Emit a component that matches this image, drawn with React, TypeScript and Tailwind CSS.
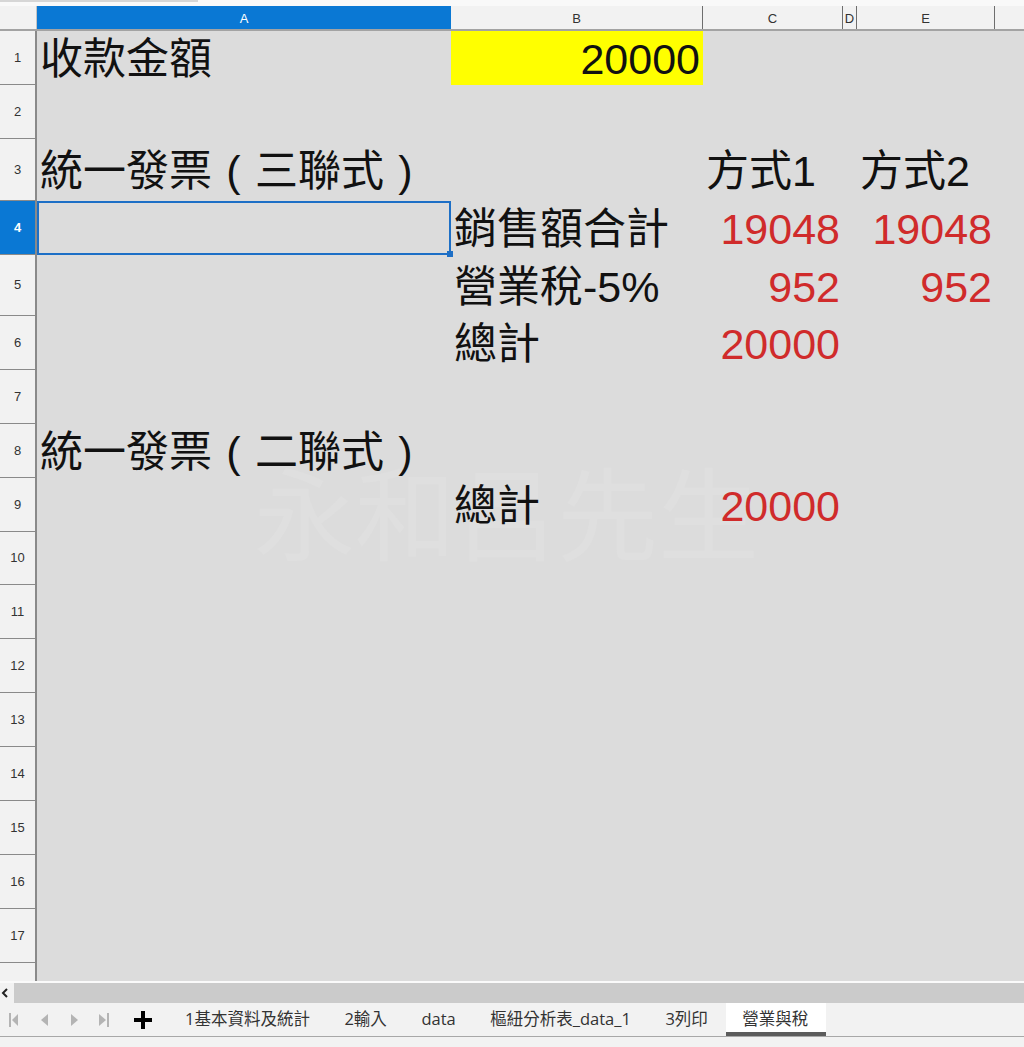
import React from "react";

type ColKey = "A" | "B" | "C" | "D" | "E" | "F";

type Cell = { text: React.ReactNode; right?: boolean; red?: boolean; fill?: boolean };

const COLS: { key: ColKey; w: string; label: string }[] = [
  { key: "A", w: "w-[414px]", label: "A" },
  { key: "B", w: "w-[252px]", label: "B" },
  { key: "C", w: "w-[140px]", label: "C" },
  { key: "D", w: "w-[14px]", label: "D" },
  { key: "E", w: "w-[138px]", label: "E" },
  { key: "F", w: "w-[80px]", label: "" },
];

const ROW_H = [
  "h-[54px]", "h-[54px]", "h-[62px]", "h-[54px]", "h-[61px]", "h-[54px]",
  "h-[54px]", "h-[54px]", "h-[54px]", "h-[53px]", "h-[54px]", "h-[54px]",
  "h-[54px]", "h-[54px]", "h-[54px]", "h-[54px]", "h-[54px]", "h-[54px]",
];

// full-width brackets sit centred in their em box
function Paren({ ch }: { ch: string }) {
  return <span className="inline-block w-[43px] text-center">{ch}</span>;
}

function Invoice({ kind }: { kind: string }) {
  return (
    <>
      統一發票
      <Paren ch="(" />
      {kind}聯式
      <Paren ch=")" />
    </>
  );
}

const DATA: Record<number, Partial<Record<ColKey, Cell>>> = {
  1: { A: { text: "收款金額" }, B: { text: "20000", right: true, fill: true } },
  3: { A: { text: <Invoice kind="三" /> }, C: { text: "方式1" }, E: { text: "方式2" } },
  4: {
    B: { text: "銷售額合計" },
    C: { text: "19048", right: true, red: true },
    E: { text: "19048", right: true, red: true },
  },
  5: {
    B: { text: "營業稅-5%" },
    C: { text: "952", right: true, red: true },
    E: { text: "952", right: true, red: true },
  },
  6: { B: { text: "總計" }, C: { text: "20000", right: true, red: true } },
  8: { A: { text: <Invoice kind="二" /> } },
  9: { B: { text: "總計" }, C: { text: "20000", right: true, red: true } },
};

const SHEETS = ["1基本資料及統計", "2輸入", "data", "樞紐分析表_data_1", "3列印", "營業與稅"];

const sans = "font-['Liberation_Sans','Noto_Sans_CJK_TC',sans-serif]";

function ColumnHeader() {
  return (
    <div className="flex h-[25px] border-b-2 border-[#a3a3a3] bg-[#f2f2f2]">
      <div className="w-[37px] shrink-0 border-r border-[#c4c4c4]" />
      {COLS.map((c) => (
        <div
          key={c.key}
          className={`${c.w} shrink-0 flex items-center justify-center pt-[2px] text-[13px] ${
            c.key === "A" ? "bg-[#0a78d4] text-white" : "border-r border-[#6e6e6e] text-[#333]"
          }`}
        >
          {c.label}
        </div>
      ))}
    </div>
  );
}

function SheetRow({ n }: { n: number }) {
  const row = DATA[n] ?? {};
  const active = n === 4;
  return (
    <div className={`relative flex shrink-0 ${ROW_H[n - 1]}`}>
      <div
        className={`w-[37px] shrink-0 flex items-center justify-center border-r-2 border-b border-[#8a8a8a] text-[13px] ${
          active ? "bg-[#0a78d4] text-white font-bold" : "bg-[#f2f2f2] text-[#333]"
        }`}
      >
        {n}
      </div>
      {COLS.map((c) => {
        const cell = row[c.key];
        const selected = active && c.key === "A";
        return (
          <div
            key={c.key}
            className={`${c.w} shrink-0 relative flex items-center whitespace-nowrap text-[43px] leading-none ${
              cell?.right ? "justify-end pr-[3px]" : "pl-[3px]"
            } ${cell?.fill ? "bg-[#ffff00]" : ""} ${cell?.red ? "text-[#d02b2b]" : "text-[#111]"} ${
              selected ? "border-2 border-[#1d6fc6]" : ""
            }`}
          >
            {cell && <span className="pt-[3px]">{cell.text}</span>}
            {selected && (
              <span className="absolute -right-[4px] -bottom-[4px] h-[6px] w-[6px] bg-[#1d6fc6]" />
            )}
          </div>
        );
      })}
    </div>
  );
}

function NavArrows() {
  return (
    <div className="flex items-center">
      <svg width="30" height="16" viewBox="0 0 30 16" className="ml-[8px]">
        <rect x="1" y="1" width="2" height="14" fill="#b4b4b4" />
        <path d="M10 2 L4 8 L10 14 Z" fill="#b4b4b4" />
      </svg>
      <svg width="30" height="16" viewBox="0 0 30 16">
        <path d="M10 2 L3 8 L10 14 Z" fill="#b4b4b4" />
      </svg>
      <svg width="30" height="16" viewBox="0 0 30 16">
        <path d="M3 2 L10 8 L3 14 Z" fill="#b4b4b4" />
      </svg>
      <svg width="30" height="16" viewBox="0 0 30 16">
        <path d="M1 2 L8 8 L1 14 Z" fill="#b4b4b4" />
        <rect x="9" y="1" width="2" height="14" fill="#b4b4b4" />
      </svg>
      <svg width="18" height="18" viewBox="0 0 18 18" className="ml-[6px]">
        <rect x="7" y="0" width="4" height="18" fill="#000" />
        <rect x="0" y="7" width="18" height="4" fill="#000" />
      </svg>
    </div>
  );
}

export default function App() {
  return (
    <div className={`h-[1047px] w-[1024px] overflow-hidden bg-[#f2f2f2] ${sans}`}>
      {/* remnant of the formula bar edge */}
      <div className="h-[6px] bg-[#f9f9f9]">
        <div className="h-[2px] w-[198px] bg-[#d6d6d6]" />
      </div>
      <ColumnHeader />
      <div className="relative flex h-[950px] flex-col overflow-hidden bg-[#dcdcdc]">
        <div className="pointer-events-none absolute left-[254px] top-[428px] whitespace-nowrap text-[101px] leading-none text-[#dfdfdf] font-['Noto_Sans_CJK_TC',sans-serif]">
          永和呂先生
        </div>
        {ROW_H.map((_, i) => (
          <SheetRow key={i} n={i + 1} />
        ))}
      </div>
      <div className="h-[2px] bg-[#fafafa]" />
      <div className="flex h-[20px]">
        <div className="flex w-[14px] items-center bg-[#f2f2f2]">
          <svg width="8" height="10" viewBox="0 0 8 10" className="ml-[1px]">
            <path d="M6 1 L2 5 L6 9" stroke="#222" strokeWidth="2" fill="none" />
          </svg>
        </div>
        <div className="flex-1 bg-[#cbcbcb]" />
      </div>
      <div className="flex h-[34px] items-stretch border-b border-[#a8a8a8] bg-[#f2f2f2]">
        <NavArrows />
        <div className="ml-[16.5px] flex items-stretch text-[16.5px] text-[#333] font-['Open_Sans','Noto_Sans_CJK_TC',sans-serif]">
          {SHEETS.map((s, i) => {
            const current = i === SHEETS.length - 1;
            return (
              <div
                key={s}
                className={`flex items-center pl-[16.5px] pr-[18px] ${
                  current ? "border-b-4 border-[#5c5c5c] bg-white pt-[4px]" : ""
                }`}
              >
                {s}
              </div>
            );
          })}
        </div>
      </div>
    </div>
  );
}
